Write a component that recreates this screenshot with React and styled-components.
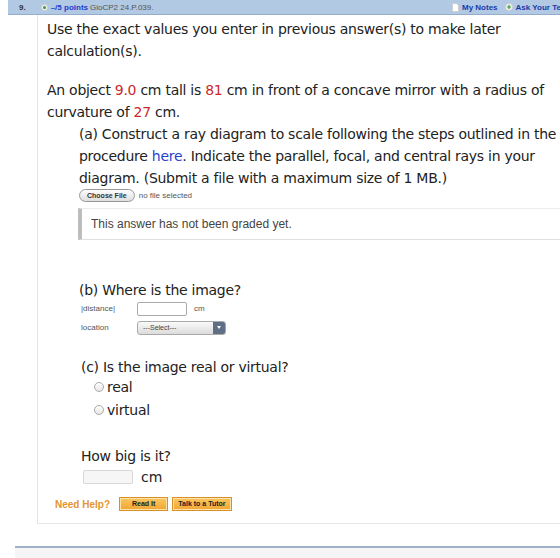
import React from 'react';
import styled, { createGlobalStyle } from 'styled-components';

const Global = createGlobalStyle`
  html, body { margin: 0; padding: 0; background: #fff; overflow: hidden; }
  body { width: 560px; height: 558px; }
`;

const Page = styled.div`
  width: 560px;
  height: 558px;
  display: flex;
  flex-direction: column;
  font-family: "DejaVu Sans", Verdana, sans-serif;
  color: #222;
`;

const TopBar = styled.div`
  margin-left: 8px;
  height: 14px;
  background: #b1c9e2;
  border-bottom: 1px solid #93aecb;
  display: flex;
  align-items: center;
  font-family: "Liberation Sans", Arial, sans-serif;
  font-size: 8px;
  font-weight: bold;
  overflow: hidden;
  white-space: nowrap;
`;

const BarGroup = styled.div`
  display: flex;
  align-items: center;
  flex-shrink: 0;
  gap: ${(p) => p.gap || 5}px;
  width: ${(p) => (p.w ? `${p.w}px` : 'auto')};
`;

const Num = styled.span`
  color: #333;
  margin-left: 11px;
  margin-right: 12px;
`;

const Points = styled.span`
  color: #1c3fcf;
`;

const Code = styled.span`
  color: #555;
  font-weight: normal;
  margin-left: -1px;
`;

const BarLink = styled.span`
  color: #1c3aa8;
  margin-right: ${(p) => p.mr || 0}px;
`;

const Dot = styled.span`
  width: 7px;
  height: 7px;
  border-radius: 50%;
  background: #f4f4f4;
  border: 1px solid #cfcfcf;
  display: inline-flex;
  align-items: center;
  justify-content: center;
  box-sizing: border-box;
  &::after {
    content: '';
    width: 3px;
    height: 3px;
    border-radius: 50%;
    background: #3a9a3a;
  }
`;

const Panel = styled.div`
  margin-left: 37px;
  height: 509px;
  border-left: 1px solid #e4e4e4;
  border-bottom: 1px solid #e8e8e8;
  padding: 3px 0 0 9px;
  box-sizing: border-box;
`;

const Para = styled.p`
  margin: 0 0 ${(p) => p.mb || 0}px;
  font-size: 14px;
  letter-spacing: -0.27px;
  line-height: 22px;
  margin-left: ${(p) => p.indent || 0}px;
`;

const Val = styled.span`
  color: #cc2a2a;
`;

const Link = styled.span`
  color: #2a3fd0;
`;

const Small = styled.span`
  font-family: "Liberation Sans", Arial, sans-serif;
  font-size: 8px;
  color: #555;
`;

const FileRow = styled.div`
  display: flex;
  align-items: center;
  gap: 4px;
  margin: -1px 0 0 32px;
  height: 14px;
`;

const FileButton = styled.span`
  font-family: "Liberation Sans", Arial, sans-serif;
  font-size: 7px;
  font-weight: bold;
  color: #333;
  border: 1px solid #999;
  border-radius: 7px;
  background: linear-gradient(#fdfdfd, #dedede);
  padding: 1px 7px;
  line-height: 9px;
`;

const GradeBox = styled.div`
  margin: 6px 0 0 31px;
  height: 30px;
  border-left: 4px solid #bdbdbd;
  border-top: 1px solid #ececec;
  border-bottom: 1px solid #e0e0e0;
  display: flex;
  align-items: center;
  padding-left: 9px;
  font-family: "Liberation Sans", Arial, sans-serif;
  font-size: 12px;
  color: #444;
`;

const Part = styled.div`
  margin-left: ${(p) => p.indent || 32}px;
  margin-top: ${(p) => p.mt || 0}px;
`;

const Fields = styled.div`
  margin-top: -2px;
`;

const FieldRow = styled.div`
  display: grid;
  grid-template-columns: 49px auto auto;
  justify-content: start;
  align-items: center;
  column-gap: 7px;
  height: 19px;
  margin-left: 2px;
`;

const FieldLabel = styled.span`
  font-family: "Liberation Sans", Arial, sans-serif;
  font-size: 8px;
  color: #555;
`;

const TextBox = styled.span`
  display: block;
  width: ${(p) => p.w || 50}px;
  height: 14px;
  box-sizing: border-box;
  border: 1px solid ${(p) => (p.muted ? '#d8d8d8' : '#aaa')};
  border-radius: 2px;
  background: ${(p) => (p.muted ? '#f6f6f6' : '#fff')};
`;

const Select = styled.span`
  display: flex;
  width: 89px;
  height: 14px;
  box-sizing: border-box;
  border: 1px solid #aaa;
  border-radius: 3px;
  background: linear-gradient(#fafafa, #dcdcdc);
  overflow: hidden;
  font-family: "Liberation Sans", Arial, sans-serif;
  font-size: 7px;
  color: #444;
  align-items: center;
`;

const SelectText = styled.span`
  flex: 1;
  padding-left: 5px;
`;

const SelectArrow = styled.span`
  width: 12px;
  height: 100%;
  background: #5f6f86;
  display: flex;
  align-items: center;
  justify-content: center;
  &::after {
    content: '';
    border-left: 2px solid transparent;
    border-right: 2px solid transparent;
    border-top: 3px solid #fff;
  }
`;

const Options = styled.div`
  margin-top: -3px;
`;

const Radio = styled.label`
  display: flex;
  align-items: center;
  gap: 3px;
  font-size: 14px;
  letter-spacing: -0.27px;
  height: 23px;
  margin-left: 13px;
`;

const RadioCircle = styled.span`
  width: 8px;
  height: 8px;
  border-radius: 50%;
  border: 1px solid #aaa;
  background: linear-gradient(#fff, #e6e6e6);
`;

const SizeRow = styled.div`
  display: flex;
  align-items: center;
  gap: 8px;
  margin: 2px 0 0 2px;
  font-size: 14px;
`;

const Help = styled.div`
  display: flex;
  align-items: center;
  gap: 4px;
  margin-top: 12px;
  margin-left: 8px;
  font-family: "Liberation Sans", Arial, sans-serif;
`;

const HelpText = styled.span`
  color: #e3952f;
  font-weight: bold;
  font-size: 10px;
  margin-right: 5px;
`;

const HelpButton = styled.span`
  font-size: 7px;
  font-weight: bold;
  color: #222;
  background: linear-gradient(#fbc75f, #f0a634);
  border: 1px solid #d9902a;
  box-shadow: inset 0 0 0 1px #fde2a8;
  padding: 1px ${(p) => p.px || 5}px;
  line-height: 10px;
`;

const Gap = styled.div`
  flex: 1;
`;

const BottomRule = styled.div`
  margin-left: 15px;
  height: 10px;
  border-top: 2px solid #9fb3c8;
  background: #f5f5f5;
`;

function NoteIcon() {
  return (
    <svg width="7" height="9" viewBox="0 0 7 9">
      <path d="M0.5 0.5h4l2 2v6h-6z" fill="#fff" stroke="#c9c9c9" strokeWidth="0.8" />
    </svg>
  );
}

function PlusDot() {
  return (
    <svg width="8" height="8" viewBox="0 0 8 8">
      <circle cx="4" cy="4" r="3.5" fill="#f2f2f2" stroke="#c8c8c8" strokeWidth="0.6" />
      <path d="M4 2v4M2 4h4" stroke="#3a9a3a" strokeWidth="1.2" />
    </svg>
  );
}

export default function App() {
  return (
    <Page>
      <Global />
      <TopBar>
        <BarGroup gap={3} w={444}>
          <Num>9.</Num>
          <Dot />
          <Points>–/5 points</Points>
          <Code>GioCP2 24.P.039.</Code>
        </BarGroup>
        <BarGroup gap={3}>
          <NoteIcon />
          <BarLink mr={4}>My Notes</BarLink>
          <PlusDot />
          <BarLink>Ask Your Teacher</BarLink>
        </BarGroup>
      </TopBar>
      <Panel>
        <Para mb={17}>
          Use the exact values you enter in previous answer(s) to make later calculation(s).
        </Para>
        <Para>
          An object <Val>9.0</Val> cm tall is <Val>81</Val> cm in front of a concave mirror with a radius of
          curvature of <Val>27</Val> cm.
        </Para>
        <Para indent={32}>
          (a) Construct a ray diagram to scale following the steps outlined in the procedure{' '}
          <Link>here</Link>. Indicate the parallel, focal, and central rays in your diagram. (Submit a
          file with a maximum size of 1 MB.)
        </Para>
        <FileRow>
          <FileButton>Choose File</FileButton>
          <Small>no file selected</Small>
        </FileRow>
        <GradeBox>This answer has not been graded yet.</GradeBox>
        <Part mt={39}>
          <Para>(b) Where is the image?</Para>
          <Fields>
            <FieldRow>
              <FieldLabel>|distance|</FieldLabel>
              <TextBox w={50} />
              <Small>cm</Small>
            </FieldRow>
            <FieldRow>
              <FieldLabel>location</FieldLabel>
              <Select>
                <SelectText>---Select---</SelectText>
                <SelectArrow />
              </Select>
              <span />
            </FieldRow>
          </Fields>
        </Part>
        <Part mt={19} indent={34}>
          <Para>(c) Is the image real or virtual?</Para>
          <Options>
            <Radio>
              <RadioCircle />
              real
            </Radio>
            <Radio>
              <RadioCircle />
              virtual
            </Radio>
          </Options>
        </Part>
        <Part mt={24} indent={34}>
          <Para>How big is it?</Para>
          <SizeRow>
            <TextBox w={50} muted />
            <span>cm</span>
          </SizeRow>
        </Part>
        <Help>
          <HelpText>Need Help?</HelpText>
          <HelpButton px={12}>Read It</HelpButton>
          <HelpButton px={5}>Talk to a Tutor</HelpButton>
        </Help>
      </Panel>
      <Gap />
      <BottomRule />
    </Page>
  );
}
